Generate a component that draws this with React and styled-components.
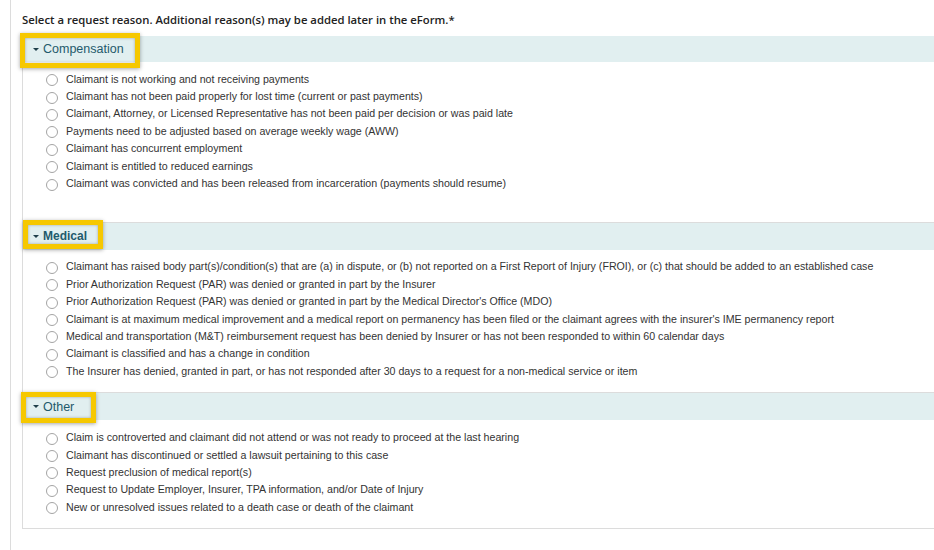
import React from "react";
import styled, {createGlobalStyle} from "styled-components";

const GlobalStyle = createGlobalStyle`
  html, body {
    margin: 0;
    padding: 0;
    background: #fff;
    overflow: hidden;
  }
  body {
    font-family: "Liberation Sans", Arial, sans-serif;
    color: #333;
  }
`;

const Page = styled.div`
  margin-left: 10px;
  border-left: 1px solid #dcdcdc;
  min-height: 550px;
  padding: 13px 0 0 11px;
  box-sizing: border-box;
`;

const Prompt = styled.p`
  margin: 0 0 9px;
  font-family: "Open Sans", "Liberation Sans", sans-serif;
  font-weight: 600;
  font-size: 11.3px;
  line-height: 14px;
  color: #222;
`;

const Box = styled.div`
  width: 940px;
  border-left: 1px solid #dcdcdc;
  border-bottom: 1px solid #dcdcdc;
`;

const Section = styled.section`
  border-top: ${p => (p.$first ? "none" : "1px solid #dcdcdc")};
  padding-bottom: ${p => p.$pad}px;
`;

const Header = styled.div`
  display: flex;
  align-items: center;
  height: ${p => p.$h || 26}px;
  background: #e1eff0;
  padding-left: 10px;
`;

// yellow annotation frame drawn over the section label
const Label = styled.span`
  position: relative;
  display: inline-flex;
  align-items: center;
  gap: 4px;
  font-size: ${p => (p.$bold ? 12 : 12.5)}px;
  line-height: 14px;
  font-weight: ${p => (p.$bold ? 700 : 400)};
  color: #1f5a6c;

  &::after {
    content: "";
    position: absolute;
    left: ${p => p.$frame[0]}px;
    right: ${p => p.$frame[1]}px;
    top: ${p => p.$frame[2]}px;
    bottom: ${p => p.$frame[3]}px;
    border: 5px solid #f6c800;
    box-shadow: 0 1px 4px rgba(0, 0, 0, 0.35), inset 0 0 3px rgba(0, 0, 0, 0.3);
  }
`;

const Caret = styled.span`
  width: 0;
  height: 0;
  border-left: 3px solid transparent;
  border-right: 3px solid transparent;
  border-top: 3px solid #1f3f4a;
`;

const List = styled.ul`
  list-style: none;
  margin: 0;
  padding: 8px 0 0 23px;
`;

const Item = styled.li`
  display: flex;
  align-items: center;
  gap: 8px;
  height: 17.4px;
  font-size: 10.65px;
  color: #333;
  white-space: nowrap;
`;

const Radio = styled.span`
  box-sizing: border-box;
  width: 12px;
  height: 12px;
  border: 1px solid #a4a4a4;
  border-radius: 50%;
  background: #fff;
  flex: none;
  margin-top: 3px;
`;

const sections = [
    {
        title: "Compensation",
        pad: 30,
        frame: [-13, -16, -9, -12],
        items: [
            "Claimant is not working and not receiving payments",
            "Claimant has not been paid properly for lost time (current or past payments)",
            "Claimant, Attorney, or Licensed Representative has not been paid per decision or was paid late",
            "Payments need to be adjusted based on average weekly wage (AWW)",
            "Claimant has concurrent employment",
            "Claimant is entitled to reduced earnings",
            "Claimant was convicted and has been released from incarceration (payments should resume)"
        ]
    },
    {
        title: "Medical",
        bold: true,
        pad: 13,
        h: 27,
        frame: [-10, -16, -9, -6],
        items: [
            "Claimant has raised body part(s)/condition(s) that are (a) in dispute, or (b) not reported on a First Report of Injury (FROI), or (c) that should be added to an established case",
            "Prior Authorization Request (PAR) was denied or granted in part by the Insurer",
            "Prior Authorization Request (PAR) was denied or granted in part by the Medical Director's Office (MDO)",
            "Claimant is at maximum medical improvement and a medical report on permanency has been filed or the claimant agrees with the insurer's IME permanency report",
            "Medical and transportation (M&T) reimbursement request has been denied by Insurer or has not been responded to within 60 calendar days",
            "Claimant is classified and has a change in condition",
            "The Insurer has denied, granted in part, or has not responded after 30 days to a request for a non-medical service or item"
        ]
    },
    {
        title: "Other",
        pad: 13,
        h: 27,
        frame: [-12, -22, -8, -9],
        items: [
            "Claim is controverted and claimant did not attend or was not ready to proceed at the last hearing",
            "Claimant has discontinued or settled a lawsuit pertaining to this case",
            "Request preclusion of medical report(s)",
            "Request to Update Employer, Insurer, TPA information, and/or Date of Injury",
            "New or unresolved issues related to a death case or death of the claimant"
        ]
    }
];

const App = () => {
    return (
        <>
            <GlobalStyle/>
            <Page>
                <Prompt>Select a request reason. Additional reason(s) may be added later in the eForm.*</Prompt>
                <Box>
                    {sections.map((s, i) => (
                        <Section key={s.title} $first={i === 0} $pad={s.pad}>
                            <Header $h={s.h}>
                                <Label $bold={s.bold} $frame={s.frame}>
                                    <Caret/>
                                    {s.title}
                                </Label>
                            </Header>
                            <List>
                                {s.items.map(text => (
                                    <Item key={text}>
                                        <Radio/>
                                        {text}
                                    </Item>
                                ))}
                            </List>
                        </Section>
                    ))}
                </Box>
            </Page>
        </>
    )
}

export default App;
